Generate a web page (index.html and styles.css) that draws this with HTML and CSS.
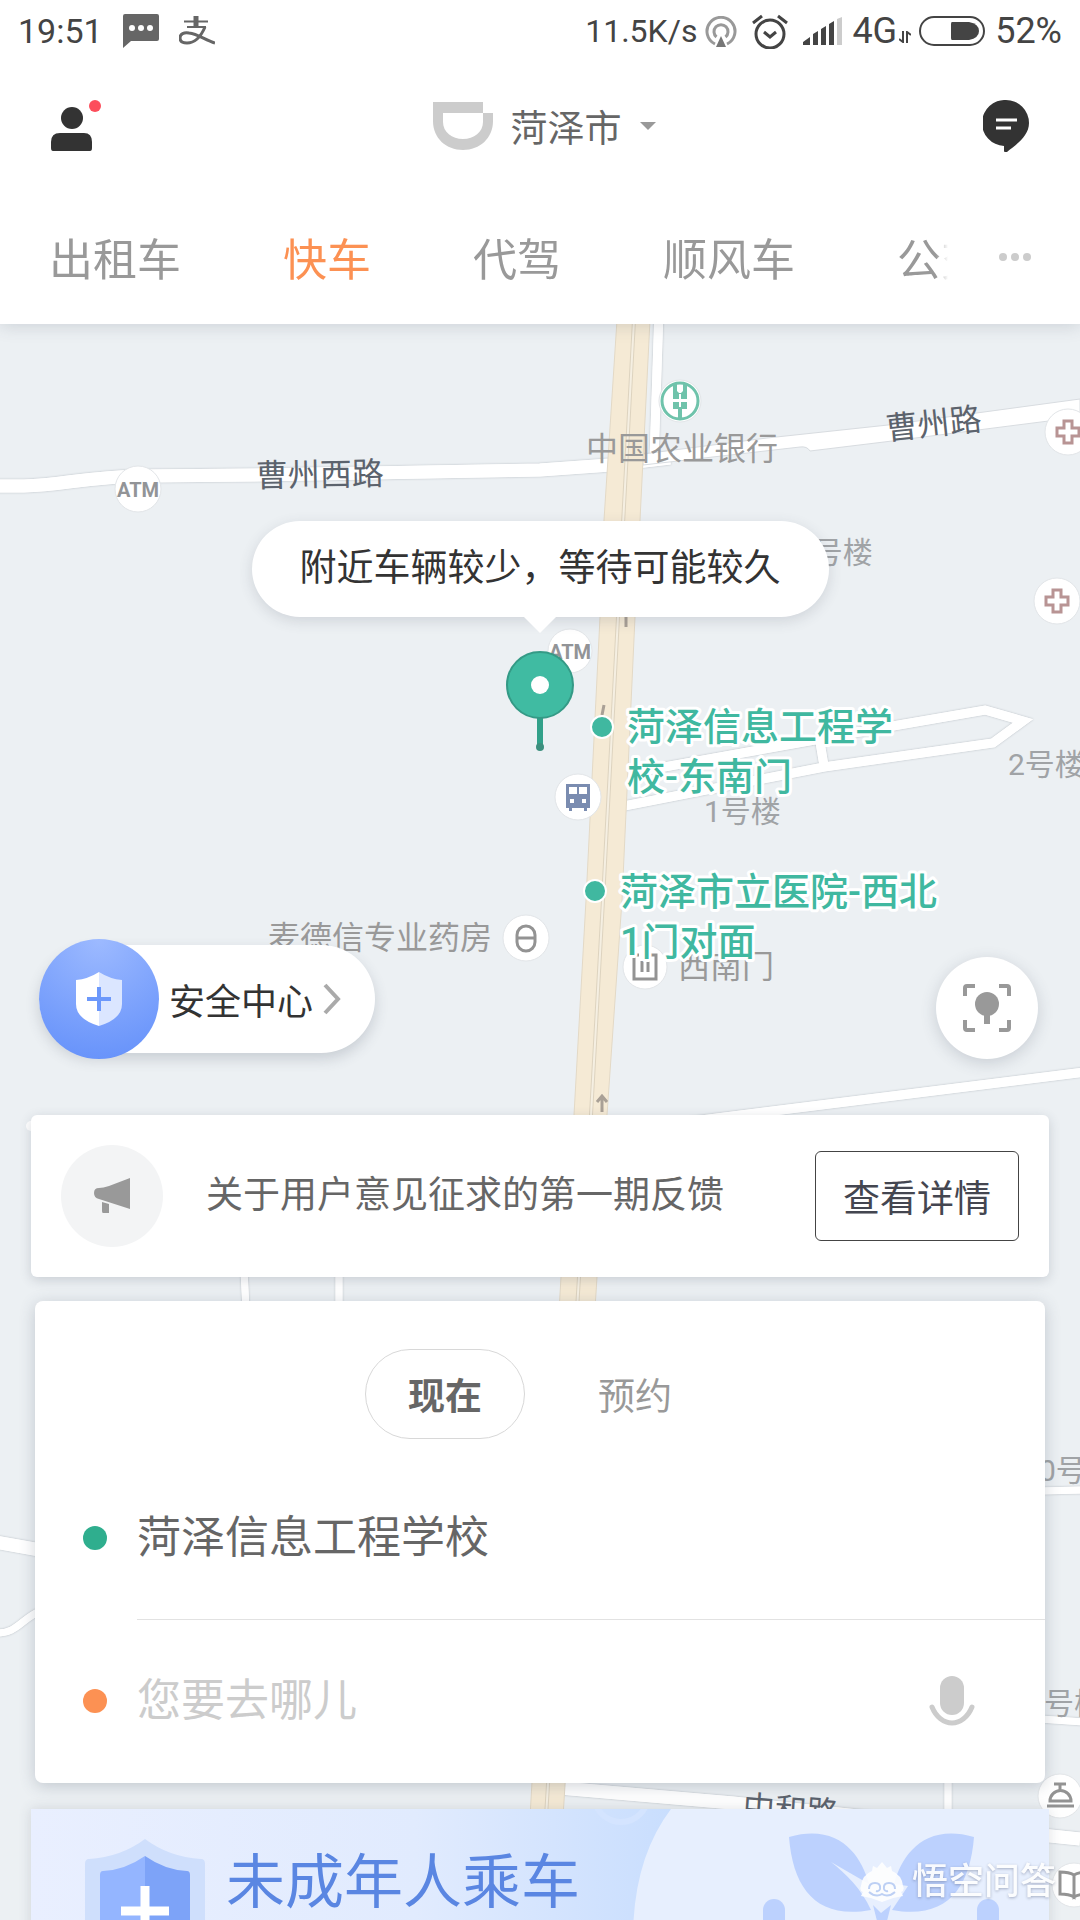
FILE: index.html
```html
<!DOCTYPE html>
<html lang="zh-CN">
<head>
    <meta charset="UTF-8">
    <meta name="viewport" content="width=device-width, initial-scale=1.0">
    <title>快车</title>
    <link rel="stylesheet" href="styles.css">
</head>
<body>
    <header class="header">
        <!-- Phone status bar -->
        <div class="status">
            <span class="clock">19:51</span>
            <svg class="status-msg" width="36" height="34" viewBox="0 0 36 34">
                <path d="M2 0h32a2 2 0 0 1 2 2v23a2 2 0 0 1-2 2H8l-8 7V2a2 2 0 0 1 2-2z" fill="#666"/>
                <circle cx="9" cy="14" r="3" fill="#fff"/>
                <circle cx="18" cy="14" r="3" fill="#fff"/>
                <circle cx="27" cy="14" r="3" fill="#fff"/>
            </svg>
            <svg width="36" height="30" viewBox="0 0 36 30" fill="none" stroke="#666">
                <path d="M5 5.500h24M8 11h19" stroke-width="2"/>
                <path d="M17 0v11" stroke-width="5"/>
                <path d="M26 11c-3 7-9 16-18 16-5 0-7-2-7-5 0-4 4-6 9-5 9 1 16 7 26 10" stroke-width="3"/>
            </svg>
            <div class="status-right">
                <span class="speed">11.5K/s</span>
                <svg class="cast" width="32" height="31" viewBox="0 0 32 31" fill="none" stroke="#999" stroke-width="3">
                    <path d="M10 28a14 14 0 1 1 12 0"/>
                    <path d="M11.500 21a7 7 0 1 1 9 0"/>
                    <path d="M16 20l5 11H11z" fill="#777" stroke="none"/>
                </svg>
                <svg class="alarm" width="36" height="35" viewBox="0 0 36 35" fill="none" stroke="#444" stroke-width="3">
                    <circle cx="18" cy="20" r="14"/>
                    <path d="M12 18l6 5 6-5M1 9l9-7M35 9l-9-7"/>
                </svg>
                <svg class="signal" width="39" height="28" viewBox="0 0 39 28" fill="#444">
                    <path d="M0 28v-3l7-5v8zM10 28V17l5-3v14zM18 28V12l5-3v19zM26 28V7l5-3v24z"/>
                    <path d="M34 28V2l5-2v28z" fill="#ccc"/>
                </svg>
                <span>4G</span>
                <svg class="updown" width="12" height="12" viewBox="0 0 12 12" fill="none" stroke="#444" stroke-width="2">
                    <path d="M4 0v11L0 8M8 12V1l4 3"/>
                </svg>
                <svg class="battery" width="66" height="30" viewBox="0 0 66 30">
                    <rect x="1" y="1" width="64" height="28" rx="14" fill="none" stroke="#444" stroke-width="2"/>
                    <path d="M33 6h17q10 2 10 9t-10 9H33q-1 0-1-2V8q0-2 1-2z" fill="#444"/>
                </svg>
                <span>52%</span>
            </div>
        </div>

        <!-- Account, city, messages -->
        <div class="topbar">
            <button class="icon-btn account" aria-label="个人中心">
                <svg width="42" height="54" viewBox="0 0 42 54" fill="#333">
                    <circle cx="21" cy="19" r="11"/>
                    <path d="M9 34h24q8 0 8 9v6q0 3-2 3H2q-2 0-2-3v-6q0-9 9-9z"/>
                </svg>
                <span class="red-dot"></span>
            </button>
            <button class="city">
                <svg width="60" height="48" viewBox="0 0 60 48" fill="#ccc">
                    <path d="M0 0h50v11H10v9c0 10 9 17 20 17s20-7 20-17v-9h10v8c0 17-13 29-30 29S0 36 0 19z"/>
                </svg>
                <span>菏泽市</span>
                <svg width="16" height="8" viewBox="0 0 16 8"><path d="M0 0h16L8 8z" fill="#999"/></svg>
            </button>
            <button class="icon-btn" aria-label="消息">
                <svg width="46" height="52" viewBox="0 0 46 52">
                    <path d="M23 0a23 23 0 0 1 23 23c0 13-13 22-22 29-1 1-3 0-3-1v-5A23 23 0 0 1 23 0z" fill="#333"/>
                    <path d="M13 20h21M13 28h15" stroke="#fff" stroke-width="3"/>
                </svg>
            </button>
        </div>

        <!-- Service tabs -->
        <nav class="tabs">
            <div class="tab-strip">
                <a href="#">出租车</a>
                <a href="#" class="active">快车</a>
                <a href="#">代驾</a>
                <a href="#">顺风车</a>
                <a href="#">公交</a>
            </div>
            <button class="more" aria-label="更多">
                <svg width="32" height="8" viewBox="0 0 32 8" fill="#ccc">
                    <circle cx="4" cy="4" r="4"/><circle cx="16" cy="4" r="4"/><circle cx="28" cy="4" r="4"/>
                </svg>
            </button>
        </nav>
    </header>

    <main class="map">
        <svg class="map-canvas" viewBox="0 324 1080 1596" preserveAspectRatio="xMidYMin slice">
            <!-- Road outlines, then the road fills on top -->
            <defs>
                <g id="roads" fill="none">
                    <path class="w13" d="M-5 486h29c40-1 60-9 120-10l110-1 286-5 70-5 60-7"/>
                    <path class="w9" d="M659 310l-5 150"/>
                    <path class="w9" d="M625 774l268-48 92-16 38 11-30 22-169 24-200 39M820 742l4 24"/>
                    <path class="w9" d="M1085 1072l-400 50"/>
                    <path class="w7" d="M244 1270l2 40M339 1270v40M948 1775v40"/>
                    <path class="w13" d="M-5 1542l45 8"/>
                    <path class="w7" d="M-5 1633c22 1 26-14 45-22"/>
                    <path class="w7" d="M1040 1491l45-1M1040 1719l45 3"/>
                    <path class="w13" d="M560 1788l173 15 347 36"/>
                </g>
            </defs>
            <circle cx="31" cy="1126" r="5" fill="#fff"/>
            <use href="#roads" class="road-edge"/>
            <use href="#roads" class="road-fill"/>
            <path d="M643 454l124-16 121-13 192-26v18l-196 25-74 9q-3-5-10-4l-157 18z" fill="#fff" stroke="#d8dce0"/>
            <path d="M617 320l-13 200-4 97-14 283-12 215-13 162-31 540h33l34-540 10-162 15-215 13-283 5-97 10-200z" fill="#f5ead5" stroke="#e3d9c6"/>
            <path d="M634 320l-16 297-15 283-12 215-12 162-33 540" fill="none" stroke="#ddd3bf" stroke-width="4"/>
            <path d="M634 320l-16 297-15 283-12 215-12 162-33 540" fill="none" stroke="#f5efe2" stroke-width="2"/>
            <path d="M626 617v10M604 705l-2 10M602 1112v-15M597 1102l5-6 5 6" fill="none" stroke="#a9a096" stroke-width="3"/>

            <!-- Road names -->
            <g class="road-name">
                <text x="256" y="487" transform="rotate(-1 256 487)">曹州西路</text>
                <text x="887" y="440" transform="rotate(-6 887 440)">曹州路</text>
                <text x="742" y="1818" transform="rotate(4 742 1818)">中和路</text>
            </g>

            <!-- Places -->
            <g class="place">
                <text x="586" y="460">中国农业银行</text>
                <text x="268" y="949">麦德信专业药房</text>
                <text x="678" y="978">西南门</text>
            </g>
            <g class="building">
                <text x="796" y="563">1号楼</text>
                <text x="1008" y="775">2号楼</text>
                <text x="704" y="822">1号楼</text>
                <text x="1039" y="1481">0号楼</text>
                <text x="1044" y="1714">号楼</text>
            </g>

            <!-- Place icons -->
            <g fill="#fff" stroke="#e2e5e8">
                <circle cx="138" cy="489" r="23"/>
                <circle cx="570" cy="651" r="22"/>
                <circle cx="1068" cy="432" r="23"/>
                <circle cx="1057" cy="601" r="23"/>
                <circle cx="680" cy="401" r="21"/>
                <circle cx="578" cy="797" r="23"/>
                <circle cx="526" cy="938" r="23"/>
                <circle cx="645" cy="967" r="22"/>
                <circle cx="1060" cy="1796" r="22"/>
                <circle cx="1074" cy="1885" r="22"/>
            </g>
            <g class="atm">
                <text x="138" y="497">ATM</text>
                <text x="570" y="659">ATM</text>
            </g>
            <g fill="none" stroke="#b89494" stroke-width="3">
                <path d="M1064 421h8v7h7v8h-7v7h-8v-7h-7v-8h7z"/>
                <path d="M1053 590h8v7h7v8h-7v7h-8v-7h-7v-8h7z"/>
            </g>
            <circle cx="680" cy="401" r="18" fill="none" stroke="#6fc3ab" stroke-width="3"/>
            <path d="M673 384h4v7l2 2h2l2-2v-7h4v15h-14zM673 402h14v7h-5v10h-4v-10h-5z" fill="#6fc3ab"/>
            <path d="M680 394v13M675 400h10" stroke="#fff" stroke-width="2"/>
            <path d="M566 784h24v24h-3v3h-3v-3h-12v3h-3v-3h-3z" fill="#7a8cb0"/>
            <path d="M569 787h8v7h-8zM579 787h8v7h-8zM570 799h4v4h-4zM582 799h4v4h-4z" fill="#fff"/>
            <g fill="none" stroke="#939393" stroke-width="3">
                <rect x="517" y="926" width="18" height="25" rx="9"/>
                <path d="M517 938h18"/>
                <path d="M639 955h-5v24h22v-24h-5M642 961v11M648 958v14"/>
                <path d="M1054 1784h12M1060 1784v6M1050 1801a10 10 0 0 1 21 0zM1047 1806h27"/>
                <path d="M1074 1875q-5-3-14-3v22q9 0 14 3zq5-3 14-3v22q-9 0-14 3z"/>
            </g>

            <!-- Recommended pick-up points -->
            <g fill="#40b8a0" stroke="#fff" stroke-width="2">
                <circle cx="602" cy="727" r="11"/>
                <circle cx="595" cy="891" r="11"/>
            </g>
            <g class="pickup">
                <text x="627" y="740">菏泽信息工程学</text>
                <text x="627" y="790">校-东南门</text>
                <text x="620" y="905">菏泽市立医院-西北</text>
                <text x="620" y="955">1门对面</text>
            </g>
        </svg>

        <div class="overlay">
            <div class="bubble">附近车辆较少，等待可能较久</div>
            <svg class="pin" width="68" height="100" viewBox="0 0 68 100">
                <path d="M34 60v36" stroke="#31a089" stroke-width="6"/>
                <circle cx="34" cy="96" r="4" fill="#3c8f7e"/>
                <circle cx="34" cy="34" r="33" fill="#40bba2" stroke="#349a86" stroke-width="2"/>
                <circle cx="34" cy="34" r="9" fill="#fff"/>
            </svg>

            <div class="controls">
                <button class="safety">
                    <span class="safety-icon">
                        <svg width="46" height="54" viewBox="0 0 46 54">
                            <path d="M23 0Q12 7 0 8v24q0 15 23 22z" fill="#fff"/>
                            <path d="M23 0q11 7 23 8v24q0 15-23 22z" fill="#dbe6ff"/>
                            <path d="M23 15v24M11 27h24" stroke="#6c98fb" stroke-width="4"/>
                        </svg>
                    </span>
                    <span>安全中心</span>
                    <svg width="18" height="32" viewBox="0 0 18 32" fill="none" stroke="#aaa" stroke-width="4">
                        <path d="M2 2l13 14L2 30"/>
                    </svg>
                </button>
                <button class="locate" aria-label="定位">
                    <svg width="48" height="48" viewBox="0 0 48 48">
                        <path d="M2 12V4q0-2 2-2h8M36 2h8q2 0 2 2v8M46 36v8q0 2-2 2h-8M12 46H4q-2 0-2-2v-8" fill="none" stroke="#999" stroke-width="4"/>
                        <circle cx="24" cy="20" r="12" fill="#999"/>
                        <path d="M24 30v10" stroke="#999" stroke-width="6"/>
                    </svg>
                </button>
            </div>

            <section class="notice">
                <span class="notice-icon">
                    <svg width="36" height="36" viewBox="0 0 36 36" fill="#999">
                        <path d="M36 0v31L5 21q-5-1-5-6t5-5q4 0 10-2z"/>
                        <path d="M8 24l7 2v9H9q-1 0-1-2z"/>
                    </svg>
                </span>
                <p>关于用户意见征求的第一期反馈</p>
                <button class="detail">查看详情</button>
            </section>

            <form class="trip">
                <div class="when">
                    <button type="button" class="selected">现在</button>
                    <button type="button">预约</button>
                </div>
                <div class="field">
                    <label for="from" class="dot from" aria-label="上车地点"></label>
                    <input type="text" id="from" value="菏泽信息工程学校">
                </div>
                <div class="field">
                    <label for="to" class="dot to" aria-label="目的地"></label>
                    <input type="text" id="to" placeholder="您要去哪儿">
                    <button type="button" aria-label="语音输入">
                        <svg width="46" height="50" viewBox="0 0 46 50">
                            <rect x="11" y="0" width="24" height="39" rx="12" fill="#ccc"/>
                            <path d="M3 31c4 10 12 16 20 16s16-6 20-16" fill="none" stroke="#ccc" stroke-width="5" stroke-linecap="round"/>
                        </svg>
                    </button>
                </div>
            </form>

            <a href="#" class="promo">
                <svg class="promo-art" viewBox="0 0 1018 200" preserveAspectRatio="xMaxYMin slice">
                    <defs>
                        <linearGradient id="sky" x1="0" x2="1">
                            <stop offset="0" stop-color="#e9efff"/>
                            <stop offset="0.600" stop-color="#e1ebfe"/>
                            <stop offset="1" stop-color="#c9defe"/>
                        </linearGradient>
                    </defs>
                    <rect width="1018" height="200" fill="#e7effe"/>
                    <path d="M0 0h640q-38 50-38 130v70H0z" fill="url(#sky)"/>
                    <circle cx="590" cy="-14" r="27" fill="none" stroke="#d4e4ff" stroke-width="6"/>
                    <g fill="#bcd1fe">
                        <path d="M758 28c50-14 72 18 80 47l-38-22c15 12 30 26 40 48-54 10-78-21-82-73z"/>
                        <path d="M943 28c-50-14-72 18-80 47l14 2-16 24c54 10 78-21 82-73z"/>
                        <path d="M846 112l-4-16 8 8 10-8-4 16v60h-10z"/>
                        <rect x="732" y="90" width="22" height="80" rx="11"/>
                        <rect x="946" y="90" width="22" height="80" rx="11"/>
                    </g>
                </svg>
                <svg class="promo-shield" width="120" height="140" viewBox="0 0 120 140">
                    <path d="M60 0Q36 18 4 20q-4 0-4 5v60q0 35 60 55 60-20 60-55V25q0-5-4-5Q84 18 60 0z" fill="#cfdffc"/>
                    <path d="M60 17Q40 31 18 32q-3 0-3 4v46q0 28 45 43z" fill="#94b5ff"/>
                    <path d="M60 17q20 14 42 15 3 0 3 4v46q0 28-45 43z" fill="#7da3f8"/>
                    <path d="M60 47v50M36 72h48" stroke="#fff" stroke-width="9"/>
                </svg>
                <strong>未成年人乘车</strong>
            </a>
        </div>
    </main>

    <div class="watermark">
        <svg width="44" height="40" viewBox="0 0 44 40">
            <path d="M22 0l5 6 4-2 1 5q10 4 11 15 2 4-2 6l2 4-10 2-11 4-11-4-10-2 2-4q-4-2-2-6Q2 13 12 9l1-5 4 2z" fill="#fff"/>
            <path d="M9 27q0-6 6-6t5 6q-1 3-4 2M35 27q0-6-6-6t-5 6q1 3 4 2M9 30q7 6 13 2 6 4 13-2" fill="none" stroke="#b9cdf3" stroke-width="2"/>
        </svg>
        <span>悟空问答</span>
    </div>
</body>
</html>
```
FILE: styles.css
```css
* {
    box-sizing: border-box;
}

body {
    display: flex;
    flex-direction: column;
    height: 100vh;
    margin: 0;
    overflow: hidden;
    position: relative;
    font-family: Roboto, "Noto Sans CJK SC", sans-serif;
    font-size: 37px;
    color: #666;
    background-color: #ecf0f3;
}

button,
input {
    font: inherit;
    color: inherit;
    border: none;
    background: none;
    padding: 0;
}

a {
    color: inherit;
    text-decoration: none;
}

svg {
    display: block;
    flex-shrink: 0;
}

/* Header */
.header {
    position: relative;
    z-index: 2;
    flex-shrink: 0;
    background-color: #fff;
    box-shadow: 0 2px 16px rgba(60, 70, 90, 0.18);
}

.status {
    display: flex;
    align-items: center;
    height: 62px;
    padding: 0 18px;
    font-size: 36px;
    color: #444;
}

.clock {
    font-size: 34px;
}

.status-msg {
    margin: 0 20px;
}

.status-right {
    display: flex;
    align-items: center;
    margin-left: auto;
}

.speed {
    font-size: 32px;
}

.cast {
    margin: 0 15px 0 8px;
}

.signal {
    margin: 0 10px 0 15px;
}

.updown {
    margin: 12px 8px 0 2px;
}

.battery {
    margin-right: 10px;
}

.topbar {
    display: flex;
    align-items: center;
    justify-content: space-between;
    height: 128px;
    padding: 0 51px;
}

.icon-btn {
    position: relative;
}

.red-dot {
    position: absolute;
    top: 1px;
    right: -8px;
    width: 12px;
    height: 12px;
    border-radius: 50%;
    background-color: #fc4d5b;
}

.city {
    display: flex;
    align-items: center;
    gap: 18px;
    padding-left: 12px;
}

.tabs {
    display: flex;
    align-items: center;
    height: 134px;
    padding: 0 49px;
    font-size: 44px;
    color: #999;
}

.tab-strip {
    display: flex;
    flex: 1;
    gap: 102px;
    overflow: hidden;
    white-space: nowrap;
    mask-image: linear-gradient(to left, transparent, #000 12px);
}

.tab-strip .active {
    color: #fc9153;
}

.more {
    margin-left: 51px;
}

/* Map */
.map {
    position: relative;
    flex: 1;
    min-height: 0;
}

.map-canvas {
    position: absolute;
    inset: 0;
    width: 100%;
    height: 100%;
}

.w7 { stroke-width: 7px; }
.w9 { stroke-width: 9px; }
.w13 { stroke-width: 13px; }

.road-fill {
    stroke: #fff;
}

.road-edge {
    stroke: #fff;
    filter: drop-shadow(0 0 1px #b4bac0);
}

.road-name {
    font-size: 32px;
    fill: #5c636d;
}

.place {
    font-size: 32px;
    fill: #999;
}

.building {
    font-size: 30px;
    fill: #a0a3a6;
}

.atm {
    font-size: 20px;
    font-weight: 700;
    text-anchor: middle;
    fill: #929497;
}

.pickup {
    font-size: 38px;
    font-weight: 500;
    fill: #40b8a0;
    stroke: #fff;
    stroke-width: 6px;
    stroke-linejoin: round;
    paint-order: stroke;
}

.overlay {
    position: relative;
    display: flex;
    flex-direction: column;
    height: 100%;
    padding: 197px 31px 0;
    overflow: hidden;
}

.overlay > * {
    flex-shrink: 0;
}

.bubble {
    position: relative;
    align-self: center;
    padding: 0 48px;
    line-height: 96px;
    border-radius: 48px;
    color: #333;
    background-color: #fff;
    box-shadow: 0 4px 14px rgba(60, 70, 90, 0.16);
}

.bubble::after {
    content: "";
    position: absolute;
    top: 100%;
    left: 50%;
    margin-left: -16px;
    border: 16px solid transparent;
    border-top-color: #fff;
    border-bottom: none;
}

.pin {
    align-self: center;
    margin-top: 34px;
}

.controls {
    display: flex;
    align-items: flex-end;
    justify-content: space-between;
    margin: 188px 0 56px;
    padding: 0 11px 0 8px;
}

.safety {
    display: flex;
    align-items: center;
    gap: 10px;
    height: 108px;
    margin: 6px 0;
    padding-right: 34px;
    border-radius: 54px;
    font-size: 36px;
    color: #333;
    background-color: #fff;
    box-shadow: 0 6px 14px rgba(60, 70, 90, 0.2);
}

.safety-icon {
    display: flex;
    align-items: center;
    justify-content: center;
    width: 120px;
    height: 120px;
    border-radius: 50%;
    background: radial-gradient(circle at 50% 0, #9dbaff, #628ffa);
}

.locate {
    display: flex;
    align-items: center;
    justify-content: center;
    width: 102px;
    height: 102px;
    border-radius: 50%;
    background-color: #fff;
    box-shadow: 0 4px 16px rgba(60, 70, 90, 0.2);
}

/* Notice card */
.notice {
    display: flex;
    align-items: center;
    height: 162px;
    padding: 0 30px;
    border-radius: 6px;
    background-color: #fff;
    box-shadow: 0 3px 12px rgba(60, 70, 90, 0.2);
}

.notice-icon {
    display: flex;
    align-items: center;
    justify-content: center;
    width: 102px;
    height: 102px;
    border-radius: 50%;
    background-color: #f3f4f5;
}

.notice p {
    flex: 1;
    margin: 0 0 0 43px;
    line-height: 52px;
}

.detail {
    width: 204px;
    height: 90px;
    border: 1px solid #444;
    border-radius: 6px;
    color: #444650;
}

/* Trip form */
.trip {
    margin: 24px 4px 26px;
    padding-top: 48px;
    border-radius: 8px;
    background-color: #fff;
    box-shadow: 0 3px 16px rgba(60, 70, 90, 0.24);
}

.when {
    display: flex;
    justify-content: center;
    gap: 30px;
    margin-bottom: 18px;
}

.when button {
    width: 160px;
    height: 90px;
    border: 1px solid transparent;
    border-radius: 45px;
    color: #999;
}

.when .selected {
    border-color: #d8d8d8;
    font-weight: 700;
    color: #666;
}

.field {
    position: relative;
    display: flex;
    align-items: center;
    height: 162px;
    padding: 0 70px 0 48px;
    font-size: 44px;
}

.field + .field {
    height: 164px;
}

.field + .field::before {
    content: "";
    position: absolute;
    top: 0;
    left: 102px;
    right: 0;
    height: 1px;
    background-color: #e2e2e2;
}

.field input {
    flex: 1;
    min-width: 0;
    height: 66px;
    line-height: 66px;
    outline: none;
}

.field input::placeholder {
    color: #ccc;
    line-height: 66px;
}

.dot {
    width: 24px;
    height: 24px;
    margin-right: 30px;
    border-radius: 50%;
}

.from {
    background-color: #2fae8e;
}

.to {
    background-color: #fc9153;
}

/* Promo banner */
.promo {
    position: relative;
    display: flex;
    align-items: flex-start;
    gap: 21px;
    height: 200px;
    padding: 30px 54px;
    color: #5a86e2;
    box-shadow: 0 0 12px rgba(60, 70, 90, 0.16);
}

.promo-art {
    position: absolute;
    inset: 0;
    width: 100%;
    height: 100%;
}

.promo-shield,
.promo strong {
    position: relative;
}

.promo strong {
    font-size: 59px;
    font-weight: 400;
    line-height: 88px;
}

.watermark {
    position: absolute;
    right: 24px;
    bottom: 16px;
    z-index: 3;
    display: flex;
    align-items: center;
    gap: 8px;
    font-size: 36px;
    line-height: 44px;
    font-weight: 500;
    color: #fff;
    opacity: 0.9;
    text-shadow: 0 1px 3px rgba(80, 90, 120, 0.5);
}
```
